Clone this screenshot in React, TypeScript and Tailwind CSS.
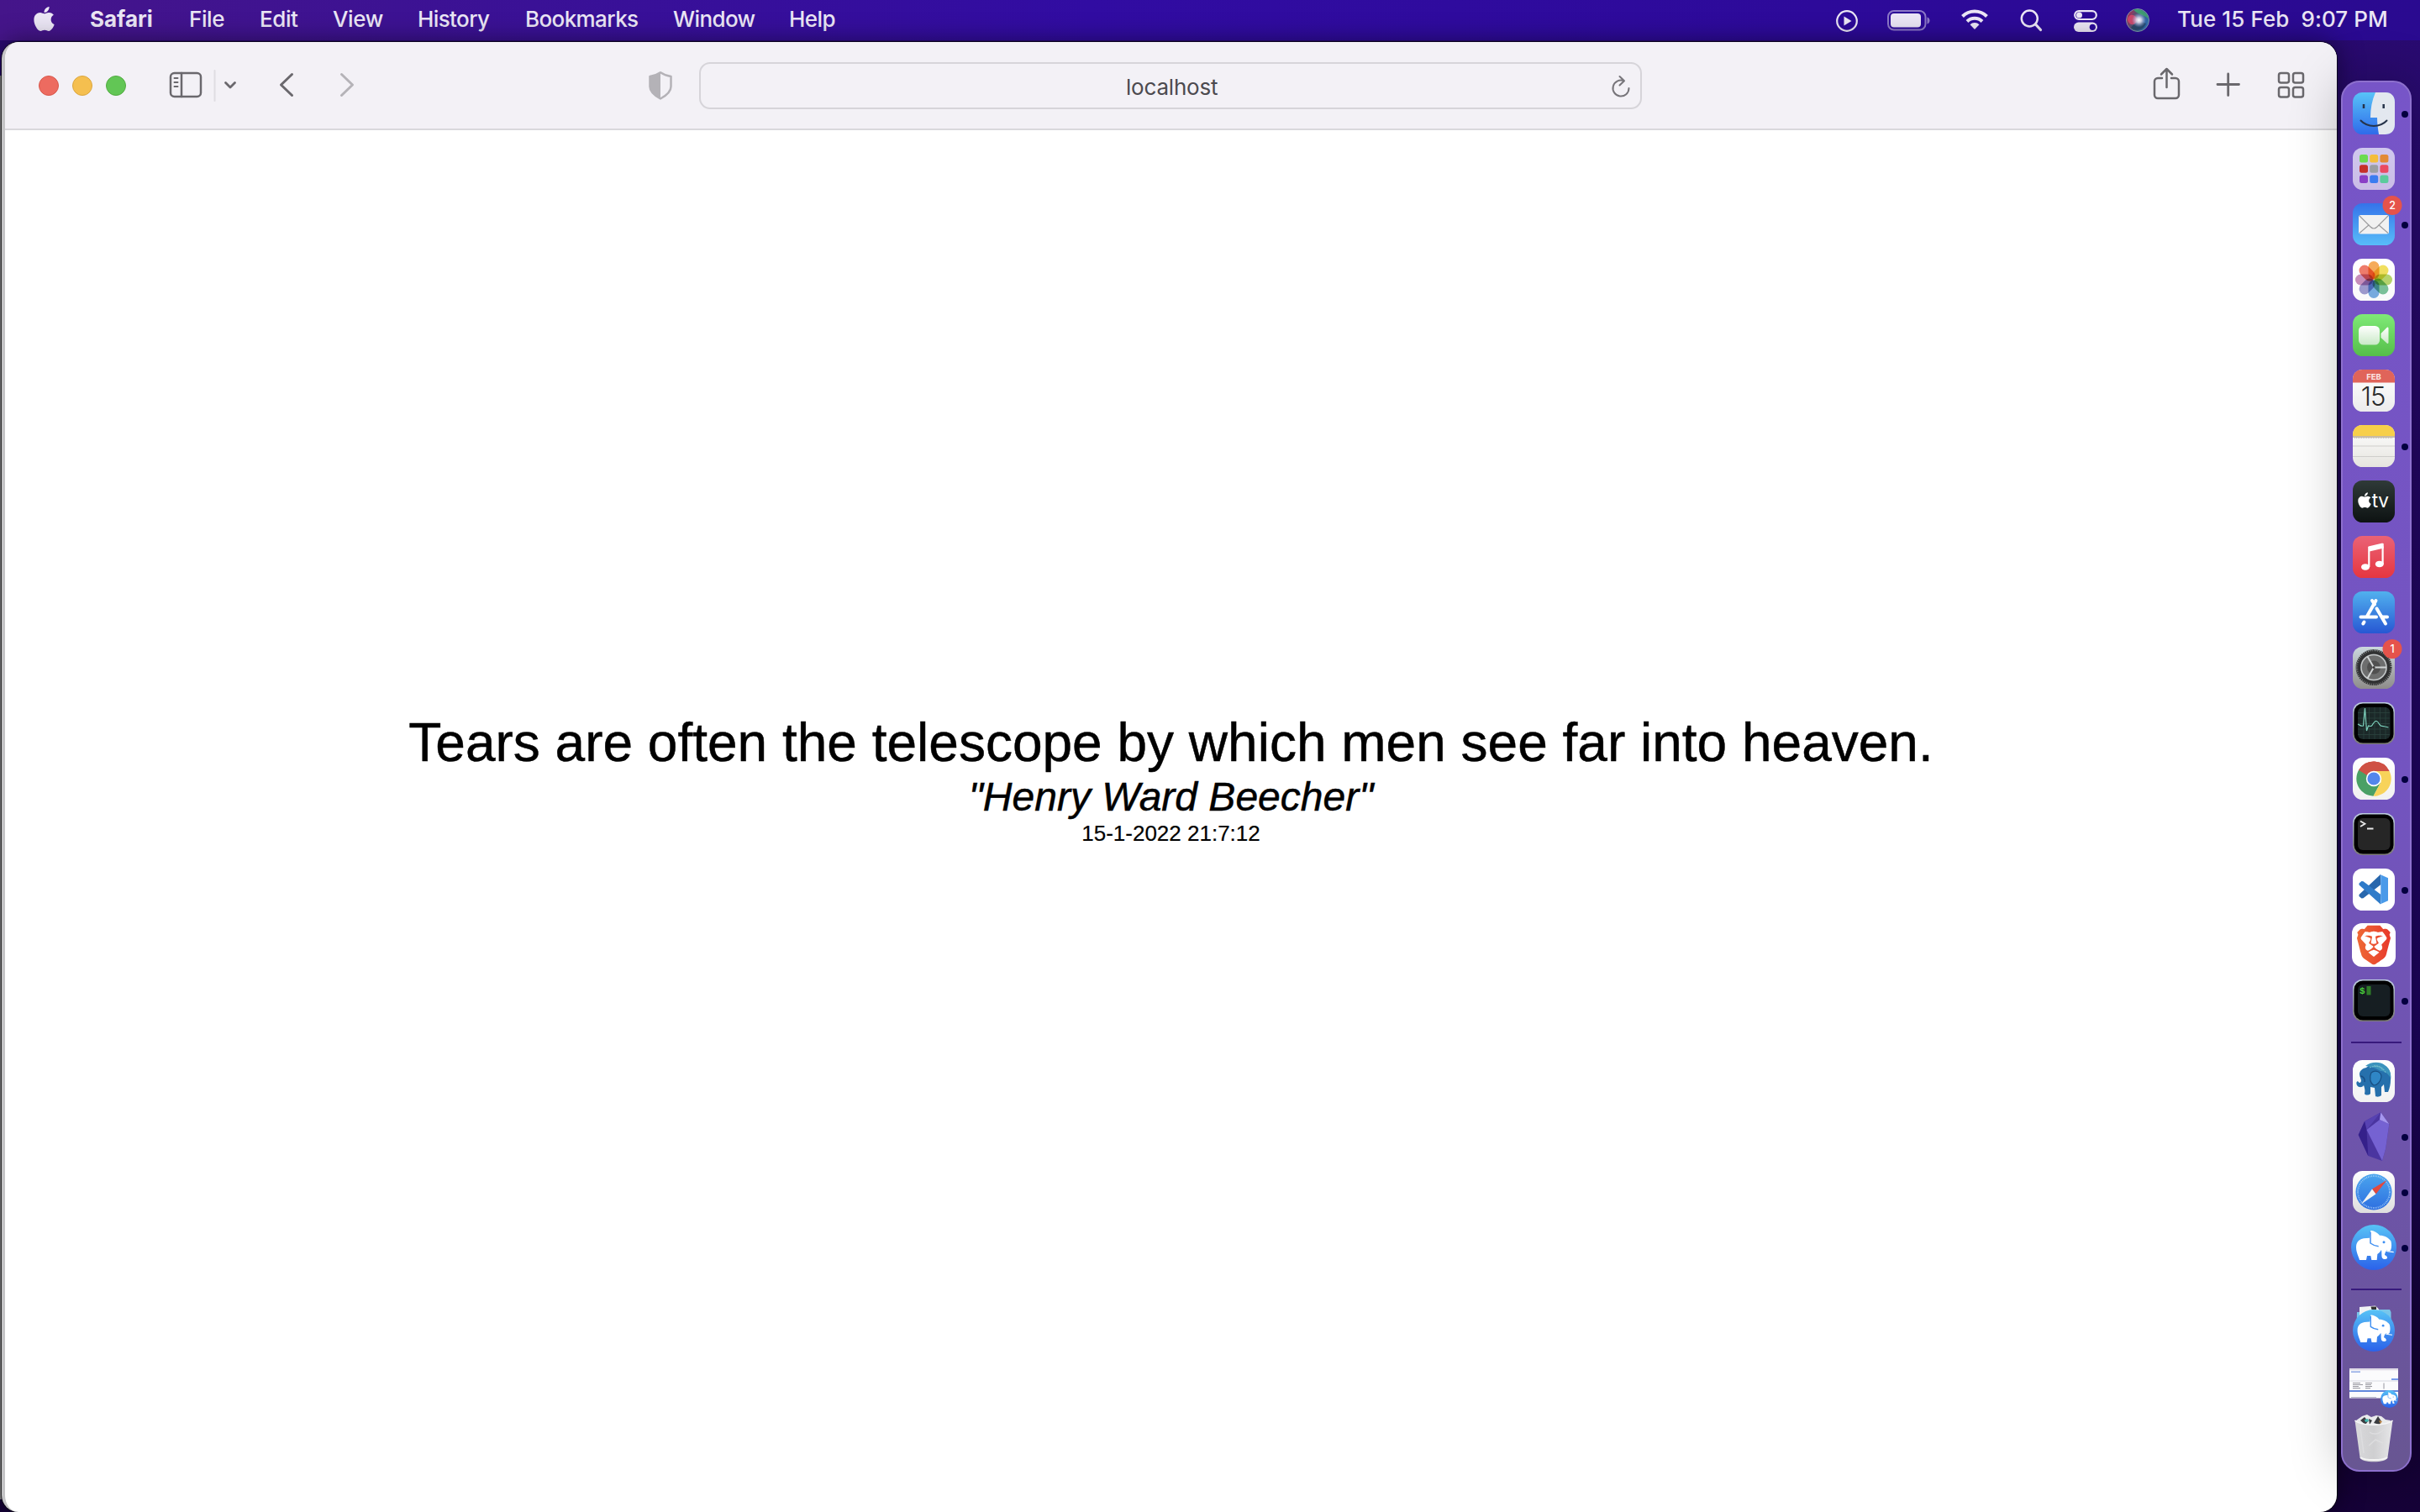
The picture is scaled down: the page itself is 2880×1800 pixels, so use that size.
import React from "react";
import { FaApple } from "react-icons/fa";
import { SiBrave } from "react-icons/si";

const SF = "font-['Inter','Liberation_Sans',sans-serif]";

const menus = [
  { t: "Safari", c: "w-[118px] font-bold tracking-[0px]" },
  { t: "File", c: "w-[84px] tracking-[-0.4px]" },
  { t: "Edit", c: "w-[87px] tracking-[-0.4px]" },
  { t: "View", c: "w-[101px] tracking-[-0.4px]" },
  { t: "History", c: "w-[128px] tracking-[-0.6px]" },
  { t: "Bookmarks", c: "w-[176px] tracking-[-0.6px]" },
  { t: "Window", c: "w-[138px] tracking-[-0.6px]" },
  { t: "Help", c: "w-[80px] tracking-[-0.6px]" },
];

function StatusIcons() {
  return (
    <svg width="380" height="48" viewBox="2184 0 380 48" fill="none" stroke="#ebe6f5">
      <circle cx="2198" cy="25" r="11.8" strokeWidth="2.2" />
      <path d="M2194.5 19.5v11l9-5.5z" fill="#ebe6f5" stroke="none" />
      <rect x="2247" y="13" width="44.500" height="22.500" rx="7" strokeWidth="2" opacity=".5" />
      <rect x="2250" y="16" width="36" height="16.500" rx="4" fill="#ebe6f5" stroke="none" />
      <path d="M2293.500 20.500c4 1 4 7 0 8z" fill="#ebe6f5" stroke="none" opacity=".5" />
      <path d="M2335.500 19.500a20.500 20.500 0 0 1 29 0M2341 25.500a12.600 12.600 0 0 1 18 0" strokeWidth="4" />
      <path d="M2350 35l-5.500-5.700a7.800 7.800 0 0 1 11 0z" fill="#ebe6f5" stroke="none" />
      <circle cx="2415.300" cy="22" r="9.500" strokeWidth="2.500" />
      <path d="M2422.500 29l6 6.500" strokeWidth="3.200" strokeLinecap="round" />
      <rect x="2469.200" y="13.200" width="25.600" height="9.800" rx="4.900" strokeWidth="2.200" />
      <circle cx="2474.500" cy="18.100" r="3.500" fill="#ebe6f5" stroke="none" />
      <rect x="2468" y="26.500" width="28" height="11.500" rx="5.700" fill="#ebe6f5" stroke="none" />
      <circle cx="2490.300" cy="32.300" r="3.600" fill="#2b0a9a" stroke="none" />
      <defs>
        <linearGradient id="siri" x1="0" x2="1" y1="0.300" y2=".7">
          <stop offset="0" stopColor="#b02a55" />
          <stop offset=".45" stopColor="#3f5f7c" />
          <stop offset="1" stopColor="#2a6ab8" />
        </linearGradient>
        <radialGradient id="siriCore">
          <stop offset="0" stopColor="#fff" />
          <stop offset=".35" stopColor="#e9e4f5" stopOpacity=".85" />
          <stop offset="1" stopColor="#a0b0f0" stopOpacity="0" />
        </radialGradient>
      </defs>
      <circle cx="2544" cy="24" r="13.500" fill="url(#siri)" stroke="#7f97a8" strokeWidth="1" />
      <path d="M2539 11.500c9-2 17 4 18 11-6-5-13-5-18-11z" fill="#3f9a72" stroke="none" />
      <path d="M2532 24c0-7 8-9 12-1-2 7-9 9-12 1z" fill="#e0486c" stroke="none" opacity=".8" />
      <path d="M2536 33c4-6 10-8 18-5-3 8-12 10-18 5z" fill="#24405f" stroke="none" opacity=".7" />
      <circle cx="2545.500" cy="24" r="8.500" fill="url(#siriCore)" stroke="none" />
    </svg>
  );
}

function MenuBar() {
  return (
    <header className={`flex h-12 w-full shrink-0 items-center bg-[linear-gradient(90deg,#45158a_0%,#3a1196_22%,#310ca2_45%,#2d0a9a_75%,#2a0a90_100%)] text-[26px] font-medium text-[#ebe6f5] ${SF}`}>
      <FaApple className="ml-[37px] mt-[-4px] h-[33px] w-[31px]" />
      <nav className="ml-[39px] mt-[-2px] flex leading-8">
        {menus.map((m) => (
          <span key={m.t} className={m.c}>{m.t}</span>
        ))}
      </nav>
      <div className="ml-auto flex">
        <StatusIcons />
        <span className="ml-[27px] mt-[7px] w-[289px] whitespace-pre leading-8 tracking-[0.1px]">Tue 15 Feb  9:07 PM</span>
      </div>
    </header>
  );
}

function Toolbar() {
  return (
    <div className="flex h-[105px] shrink-0 items-center border-b-2 border-[#d9d8dc] bg-[#f3f1f6]">
      <div className="ml-[40px] flex gap-4">
        <i className="size-6 rounded-full border border-[#d8574b] bg-[#ed6b60]" />
        <i className="size-6 rounded-full border border-[#dba63f] bg-[#f5bf4f]" />
        <i className="size-6 rounded-full border border-[#52ab41] bg-[#62c655]" />
      </div>
      <svg className="-mt-px ml-[44px]" width="240" height="60" viewBox="194 71 240 60" fill="none" stroke="#6a686d" strokeWidth="2.500" strokeLinecap="round" strokeLinejoin="round">
        <rect x="203" y="87" width="36" height="28" rx="4.500" />
        <path d="M216 87v28" />
        <path d="M207.500 93h4M207.500 98h4M207.500 103h4" strokeWidth="2" />
        <path d="M255.500 84v36" stroke="#dfdde2" strokeWidth="2" />
        <path d="M268.500 98.500l5.500 5.500 5.500-5.500" strokeWidth="2.800" />
        <path d="M347.500 88.500l-13 12.500 13 12.500" strokeWidth="3" />
        <path d="M406.500 88.500l13 12.500-13 12.500" stroke="#b5b3b8" strokeWidth="3" />
      </svg>
      <svg className="ml-[337px]" width="30" height="36" viewBox="0 0 30 36">
        <path d="M15 2.300C11 5 7 6.500 2.500 7v12c0 6 6 11 12.500 14.500C21.500 30 27.500 25 27.500 19V7C23 6.500 19 5 15 2.300z" fill="none" stroke="#b4b2b7" strokeWidth="2.500" strokeLinejoin="round" />
        <path d="M15 2C11 5 7 6.500 2 7v12c0 6 6 11 13 15z" fill="#b4b2b7" />
      </svg>
      <div className={`mt-px ml-[31px] flex h-14 w-[1122px] items-center rounded-[13px] border-2 border-[#d6d4d9] text-[26px] text-[#4c4a4f] ${SF}`}>
        <span className="ml-[506px] mt-[3px] leading-8 tracking-[-0.2px]">localhost</span>
        <svg className="ml-auto mr-[9px] mt-px" width="28" height="32" viewBox="0 0 28 32" fill="none" stroke="#77757a" strokeWidth="2" strokeLinecap="round" strokeLinejoin="round">
          <path d="M17.500 9.200A9.500 9.500 0 1 0 23.500 18M12.500 4l5.500 5.200-5.500 5.300" />
        </svg>
      </div>
      <svg className="-mt-[2px] ml-auto mr-[31px]" width="190" height="60" viewBox="2560 71 190 60" fill="none" stroke="#6a686d" strokeWidth="2.500" strokeLinecap="round" strokeLinejoin="round">
        <path d="M2573 93h-5a4 4 0 0 0-4 4v16a4 4 0 0 0 4 4h21a4 4 0 0 0 4-4V97a4 4 0 0 0-4-4h-5M2578.500 104V83M2572 88.500l6.500-6.500 6.500 6.500" />
        <path d="M2639 100.500h25.500M2651.700 88v25.500" strokeWidth="2.800" />
        <rect x="2712" y="87" width="12" height="11.500" rx="2.500" />
        <rect x="2729" y="87" width="12" height="11.500" rx="2.500" />
        <rect x="2712" y="104" width="12" height="11.500" rx="2.500" />
        <rect x="2729" y="104" width="12" height="11.500" rx="2.500" />
      </svg>
    </div>
  );
}

function Grad({ id, a, b }: { id: string; a: string; b: string }) {
  return (
    <linearGradient id={id} x1="0" x2="0" y1="0" y2="1">
      <stop offset="0" stopColor={a} />
      <stop offset="1" stopColor={b} />
    </linearGradient>
  );
}

function Tile({ id, a, b }: { id: string; a: string; b: string }) {
  return (
    <>
      <defs><Grad id={id} a={a} b={b} /></defs>
      <rect x="5" y="5" width="50" height="50" rx="11.500" fill={`url(#${id})`} />
    </>
  );
}

function Badge({ n }: { n: string }) {
  return (
    <>
      <circle cx="52" cy="7.500" r="11.500" fill="#e5534b" />
      <text x="52" y="12" fontSize="12.500" fontWeight="500" fill="#fff" textAnchor="middle" className={SF}>{n}</text>
    </>
  );
}

function Elephant({ id }: { id: string }) {
  return (
    <>
      <defs><Grad id={id} a="#57c3f6" b="#2b62ea" /></defs>
      <circle cx="195" cy="195" r="81" fill={`url(#${id})`} />
      <path fill="#fff" d="M144 240C141 226 132 214 132 194C132 170 148 161 180 161L184 134C198 136 210 143 216 152C232 152 248 160 256 172C259 182 259 194 256 203C252 210 246 210 241 205C237 211 234 218 234 222C240 224 244 229 243 234C238 239 226 238 224 230C222 222 224 212 222 204C218 211 213 216 208 219L206 240H187L184 225H171L168 240Z" />
      <path d="M183 140V180C192 187 202 190 212 191" fill="none" stroke="#3f8ff2" strokeWidth="4.500" />
      <circle cx="231" cy="176" r="4.500" fill="#3f8ff2" />
      <path d="M238 206C246 213 256 209 266 212" fill="none" stroke="#fff" strokeWidth="3.500" />
    </>
  );
}

const petals = ["#f49a35", "#efd93c", "#a9cc4c", "#5fb685", "#5b9bdc", "#8a86c6", "#bd78ad", "#ec5f4a"];
const pads = ["#6bdb4f", "#f4bd3c", "#e28a35", "#c6302a", "#9b9ea3", "#ea4a62", "#8a3fc6", "#3b7cf0", "#5bcb9c"];

const icons: { dot?: boolean; el: React.ReactNode }[] = [
  { dot: true, el: <>
    <Tile id="fi" a="#58c3f8" b="#2f6bea" />
    <path d="M32 5h12c7 0 11 4.500 11 11.500v27C55 50.500 50.500 55 43.500 55H36c-1-6-2-13-2-20h-8c0-11 2-21 6-30z" fill="#e3e8ef" />
    <path d="M18 19v5M41.700 19v5" stroke="#26344a" strokeWidth="2.500" />
    <path d="M14.500 38.500c8 8.500 23 8.500 31 0" fill="none" stroke="#26344a" strokeWidth="2" strokeLinecap="round" />
  </> },
  { el: <>
    <Tile id="lp" a="#d0c8ee" b="#cabce6" />
    {pads.map((c, i) => <rect key={c} x={13 + (i % 3) * 12.2} y={13 + Math.floor(i / 3) * 12.2} width="10" height="9.500" rx="2.500" fill={c} />)}
  </> },
  { dot: true, el: <>
    <Tile id="ml" a="#3573ea" b="#58bdf9" />
    <rect x="12" y="19" width="36" height="22.500" rx="2.500" fill="#f1f1f1" />
    <path d="M13 20l13 13c2.500 2.500 5.500 2.500 8 0l13-13M13 40.500l11.500-10M47 40.500l-11.500-10" fill="none" stroke="#9a9a9c" strokeWidth="1.100" />
    <Badge n="2" />
  </> },
  { el: <>
    <Tile id="ph" a="#fff" b="#fafafa" />
    {petals.map((c, i) => <rect key={c} x="23.500" y="8" width="13" height="21.500" rx="6.500" fill={c} className="mix-blend-multiply" opacity=".82" transform={`rotate(${i * 45} 30 30)`} />)}
  </> },
  { el: <>
    <Tile id="ft" a="#7fea77" b="#55be49" />
    <defs><Grad id="cam" a="#fff" b="#c9e9c6" /></defs>
    <rect x="12" y="19" width="25" height="22.500" rx="5.500" fill="url(#cam)" />
    <path d="M38.500 28l7-7c1-1 2-.5 2 1v16.500c0 1.500-1 2-2 1l-7-6.500z" fill="url(#cam)" />
  </> },
  { el: <>
    <Tile id="cl" a="#fff" b="#ececec" />
    <path d="M5 20.500v-4C5 9.500 9.500 5 16.500 5h27C50.500 5 55 9.500 55 16.500v4z" fill="#e0645a" />
    <text x="30" y="17" fontSize="9.500" fontWeight="700" fill="#fbe6e4" textAnchor="middle" className={SF}>FEB</text>
    <text x="29" y="47.500" fontSize="31" fontWeight="300" fill="#2b2b2b" textAnchor="middle" letterSpacing="-1" className={SF}>15</text>
  </> },
  { dot: true, el: <>
    <Tile id="nt" a="#fff" b="#e6e4df" />
    <path d="M5 18v-1.500C5 9.500 9.500 5 16.500 5h27C50.500 5 55 9.500 55 16.500V18z" fill="#f7cf4a" />
    <path d="M5 19h50" stroke="#b8a98a" strokeWidth="1.500" />
    <path d="M7 20.500h46" stroke="#bdbdbd" strokeDasharray="1 1" />
    <path d="M5 30h50M5 42.500h50" stroke="#cfcecb" />
  </> },
  { el: <>
    <Tile id="tv" a="#2f3a38" b="#0d1212" />
    <FaApple x="8.500" y="18" size={21} fill="#fff" />
    <text x="27.800" y="37.300" fontSize="22.500" fill="#fff" className={SF} textLength="20">tv</text>
  </> },
  { el: <>
    <Tile id="mu" a="#ea6376" b="#e63640" />
    <path d="M24.200 20.500l17-4" stroke="#fff" strokeWidth="6" />
    <path d="M24.300 18v24M40.600 14v24.500" stroke="#fff" strokeWidth="2.200" />
    <ellipse cx="20" cy="42" rx="5" ry="3.800" fill="#fff" />
    <ellipse cx="36.800" cy="38.500" rx="5" ry="3.800" fill="#fff" />
  </> },
  { el: <>
    <Tile id="as" a="#51b1ee" b="#2757d3" />
    <path d="M28 16l3 4.500M32.500 16L21.500 35.500M33.500 25.500L44 43.500M14.500 35.500H33M40.500 35.500H46M18.500 41.500l-1.200 2" stroke="#fff" strokeWidth="4" strokeLinecap="round" />
  </> },
  { el: <>
    <Tile id="st" a="#ccd8de" b="#8e8c8a" />
    <circle cx="30" cy="29.500" r="20" fill="#6e706f" stroke="#323334" strokeWidth="3" strokeDasharray="1.600 .7" />
    <circle cx="30" cy="29.500" r="17.500" fill="#5a5b5c" stroke="#303132" strokeWidth="3" />
    <circle cx="30" cy="29.500" r="15" fill="#6d6e6e" stroke="#c3c7c8" strokeWidth="1.500" />
    <circle cx="30" cy="29.500" r="8" fill="#505050" />
    <path d="M30 29.500h15M30 29.500l-7.500-13M30 29.500l-7.500 13" stroke="#d0d3d4" strokeWidth="2" />
    <circle cx="30" cy="29.500" r="1.500" fill="#3a3a3a" />
    <Badge n="1" />
  </> },
  { el: <>
    <Tile id="am" a="#bccbe0" b="#7b7975" />
    <rect x="6.500" y="6.500" width="47" height="47" rx="10.500" fill="#000" />
    <rect x="11" y="11" width="38.500" height="38" rx="6" fill="#1b2828" />
    <path d="M18 11v38M24.500 11v38M31 11v38M37.500 11v38M44 11v38M11 17.500h38M11 24h38M11 30.500h38M11 37h38M11 43.500h38" stroke="#2c4541" strokeWidth=".7" />
    <path d="M11 31c3 1.500 4 3 6.500 2L19.500 12l2 27 2-6c3 1 4 1 6-3 3-4 5-3 7 1 2 4 5 2 7 3l4 1" fill="none" stroke="#7cd0bb" strokeWidth="1.200" />
  </> },
  { dot: true, el: <>
    <Tile id="ch" a="#fff" b="#f1f1f1" />
    <path d="M30 30L12.200 19.500A20.700 20.700 0 0 1 48.500 21H30z" fill="#cf5144" />
    <path d="M30 30L12.200 19.500A20.700 20.700 0 0 0 29.500 50.700L38 35z" fill="#4aa065" />
    <path d="M12.200 19.500A20.700 20.700 0 0 1 48.500 21H30a9 9 0 0 0-8.300 12z" fill="#cf5144" />
    <path d="M12 19.800L21.700 35 30 30l-8-4z" fill="#4aa065" />
    <path d="M30 21h18.600A20.700 20.700 0 0 1 29.500 50.700L38.500 34z" fill="#f8d35a" />
    <circle cx="30" cy="30" r="9.200" fill="#fff" />
    <circle cx="30" cy="30" r="7.600" fill="#5486ec" />
  </> },
  { el: <>
    <Tile id="tm" a="#bccbe0" b="#7b7975" />
    <rect x="6.500" y="6.500" width="47" height="47" rx="10.500" fill="#000" />
    <rect x="11" y="11" width="38.500" height="38" rx="6" fill="#262626" />
    <path d="M14 14.500l5.500 3.300-5.500 3.300M22 23.500h7.500" fill="none" stroke="#e8e8e8" strokeWidth="1.800" />
  </> },
  { dot: true, el: <>
    <Tile id="vs" a="#fff" b="#fff" />
    <path d="M38 12L12.500 36v2l3 2.500 2-.2L38.500 24z" fill="#2867ad" />
    <path d="M38 47.500L12.500 24.500v-2l3-2.500 2 .2L38.500 36z" fill="#2f7bc9" />
    <path d="M37.500 12l9.500 4.300v27L37.500 47.500l.8-1V13.500z" fill="#4a9ae9" />
  </> },
  { el: <>
    <rect x="4" y="4" width="52" height="52" rx="12" fill="#fff" />
    <defs>
      <linearGradient id="br" x1="0" x2="1"><stop offset="0" stopColor="#ee6a35" /><stop offset="1" stopColor="#e8392b" /></linearGradient>
    </defs>
    <SiBrave x="6.500" y="6.500" size={47} fill="url(#br)" />
  </> },
  { dot: true, el: <>
    <Tile id="it" a="#bccbe0" b="#7b7975" />
    <rect x="6.500" y="6.500" width="47" height="47" rx="10.500" fill="#000" />
    <rect x="11" y="11" width="38.500" height="38" rx="6" fill="#161e22" />
    <text x="13" y="22" fontSize="11" fontWeight="700" fill="#4ad03c" className="font-['Liberation_Mono',monospace]">$</text>
    <rect x="21.500" y="13" width="5" height="10.500" fill="#2f7d28" />
  </> },
];

const lower: { dot?: boolean; el: React.ReactNode }[] = [
  { el: <>
    <Tile id="pg" a="#fff" b="#f2f2f2" />
    <path d="M13 22c0-4 3-7 8-8 6-6 17-6 22-2 6 3 8 10 7 17 0 5-1 9-3 14h-4l-1-9-3 3v10c-2 2-6 2-7 1l-1-10-5-1v8c-2 2-6 2-7 0 1-4 0-7-1-10-2 3-6 3-8 0-1-2-1-4 1-5 1 2 3 3 4 0 0-3-2-5-2-8z" fill="#2670ac" />
    <path d="M20 12c6-5 17-6 23-1 5 3 8 9 7 15-4-6-8-8-12-8-6-4-12-5-18-6z" fill="#3b93bd" />
    <path d="M25 14c6-3 13-2 16 3M30 12c6-1 12 3 14 8" fill="none" stroke="#73bccb" strokeWidth="1.200" strokeDasharray="2 1" />
    <path d="M27 20c5-4 12-1 12 5-1 6-5 10-9 10-4-2-6-9-3-15z" fill="#2f86c6" stroke="#184e82" strokeWidth="1.200" />
    <path d="M14 24c3 0 6 3 5 7" fill="none" stroke="#184e82" strokeWidth="1.500" />
  </> },
  { dot: true, el: <>
    <path d="M38.300 1.300L19 12 11.700 28l11.600 25L40 59l4-14 4.300-29.700z" fill="#4a35a0" />
    <path d="M19 12L38.300 1.300 21.500 22z" fill="#5742b2" />
    <path d="M11.700 28L19 12l2.500 10L23.300 53z" fill="#35208a" />
    <path d="M21.500 22L37 10l11.300 5.300L44 45l-4 14z" fill="#7562d2" />
    <path d="M38.300 1.300L37 10l11.300 5.300z" fill="#a596ee" />
  </> },
  { dot: true, el: <>
    <Tile id="sf" a="#fff" b="#dedede" />
    <defs><Grad id="sfd" a="#4aa5ee" b="#2e6fe0" /></defs>
    <circle cx="30" cy="30" r="21.500" fill="url(#sfd)" />
    <circle cx="30" cy="30" r="19" fill="none" stroke="#b9dcfa" strokeWidth="2" strokeDasharray=".7 1.300" />
    <path d="M45.500 16L28 26.500l4.500 6z" fill="#e2483d" />
    <path d="M15 44.500l13-18 4.500 6z" fill="#f4f4f4" />
  </> },
  { dot: true, el: <svg x="3" y="3" width="54" height="54" viewBox="114 114 162 162"><Elephant id="e1" /></svg> },
];

const files: React.ReactNode[] = [
  <>
    <path d="M10 11h14l3-3h22l1.500 3v20h-41z" fill="#79c6ea" />
    <path d="M13 5l19-1.500 4 4V24H13z" fill="#f0f2f4" />
    <path d="M26.500 4.500h6.500v3.500h-5.500z" fill="#333" />
    <svg x="5" y="8" width="50" height="50" viewBox="114 114 162 162"><Elephant id="e2" /></svg>
  </>,
  <>
    <rect x="1" y="12" width="58" height="35.500" fill="#fbfbfd" />
    <path d="M1 13.200h58" stroke="#dcd6e4" strokeWidth="2" />
    <path d="M3 16.200h11" stroke="#8fa8e6" strokeWidth="1.500" />
    <path d="M1 27h58" stroke="#d8dae2" />
    <path d="M51 25h8" stroke="#4a7be8" strokeWidth="1.500" />
    <path d="M5 29.500h9M5 31.500h12M5 33.500h7M5 35.500h9M20 29.500h8M20 31.500h7M20 33.500h8M20 35.500h6M42 29.500v7" stroke="#7d7d86" strokeWidth=".8" />
    <path d="M1 39h58" stroke="#2f62d0" strokeWidth="1.600" />
    <path d="M3 46.500h30" stroke="#b5b8c8" strokeWidth="1" />
    <svg x="38" y="38" width="21" height="21" viewBox="114 114 162 162"><Elephant id="e3" /></svg>
  </>,
  <>
    <defs>
      <linearGradient id="tr" x1="0" x2="1"><stop offset="0" stopColor="#d9d9db" /><stop offset=".5" stopColor="#cfcfd1" /><stop offset="1" stopColor="#e6e6e8" /></linearGradient>
    </defs>
    <path d="M9 8l7-5 6-2 5 3 6-2 6 1 5 4 6 1-3 8H12z" fill="#e9eaec" />
    <path d="M14 8l5-4 4 5-3 4zM30 11l5-8 4 6-2 4zM24 6l4 2-3 5z" fill="#3a3c40" />
    <path d="M19 7l4-1 1 3-4 1z" fill="#3fb8b0" />
    <path d="M36 8l4 1-2 3z" fill="#c08a4a" />
    <path d="M7.500 8c8 7 37 7 45 0l-6 44c-1 7-32 7-33 0z" fill="url(#tr)" />
    <path d="M7.500 8c8 7 37 7 45 0" fill="none" stroke="#f7f7f8" strokeWidth="1.500" />
    <path d="M14 17l4 30M25 22c6 4 12 2 18-4M24 38l8-7 9 4" fill="none" stroke="#dddddf" strokeWidth="1.500" />
    <path d="M14 52c6 4 26 4 32 0" fill="none" stroke="#f5f5f5" strokeWidth="2" />
  </>,
];

function Slot({ dot, children }: { dot?: boolean; children: React.ReactNode }) {
  return (
    <div className="flex h-[66px] items-center pl-[7px]">
      <svg width="60" height="60" viewBox="0 0 60 60" className="isolate shrink-0 overflow-visible">{children}</svg>
      {dot && <i className="ml-[3px] mt-[2px] size-2 shrink-0 rounded-full bg-[#03003f]" />}
    </div>
  );
}

function Separator() {
  return <div className="h-[30px] pl-[10px] pt-4"><div className="h-[2px] w-[60px] bg-[#37197c]" /></div>;
}

function Dock() {
  return (
    <aside className="ml-[5px] mt-12 h-[1656px] w-[84px] shrink-0 rounded-[22px] border-2 border-[#8d70cd] bg-[linear-gradient(180deg,#7755c8_0%,#7354c0_50%,#6d54a8_80%,#685692_100%)] pt-1 shadow-[0_0_60px_rgba(0,0,0,0.25)]">
      {icons.map((it, i) => <Slot key={i} dot={it.dot}>{it.el}</Slot>)}
      <Separator />
      {lower.map((it, i) => <Slot key={i} dot={it.dot}>{it.el}</Slot>)}
      <Separator />
      {files.map((el, i) => <Slot key={i}>{el}</Slot>)}
    </aside>
  );
}

export default function App() {
  return (
    <div className="flex h-[1800px] w-[2880px] flex-col overflow-hidden bg-[linear-gradient(180deg,#2a0b72_0%,#220660_30%,#1b0458_70%,#12022f_92%,#160238_100%)]">
      <MenuBar />
      <div className="flex h-[1752px]">
        <div className="mt-[42px] h-[1695px] w-[2px] shrink-0 bg-[#8b8b8d]" />
        <main className="mt-[2px] flex h-[1750px] w-[2779px] shrink-0 flex-col overflow-hidden rounded-[20px] border-l-4 border-[#c4c4c6] bg-white shadow-[0_0_0_1px_rgba(0,0,0,0.6),0_0_30px_rgba(0,0,0,0.5)]">
          <Toolbar />
          <section className="flex flex-1 flex-col items-center pt-[692px] font-['Liberation_Sans',Arial,sans-serif] text-black [-webkit-text-stroke:0.5px_black]">
            <p className="text-[64px] leading-[74px]">Tears are often the telescope by which men see far into heaven.</p>
            <p className="text-[48px] italic leading-[56px]">"Henry Ward Beecher"</p>
            <p className="text-[26px] leading-[31px] [-webkit-text-stroke:0.2px_black]">15-1-2022 21:7:12</p>
          </section>
        </main>
        <Dock />
      </div>
    </div>
  );
}
